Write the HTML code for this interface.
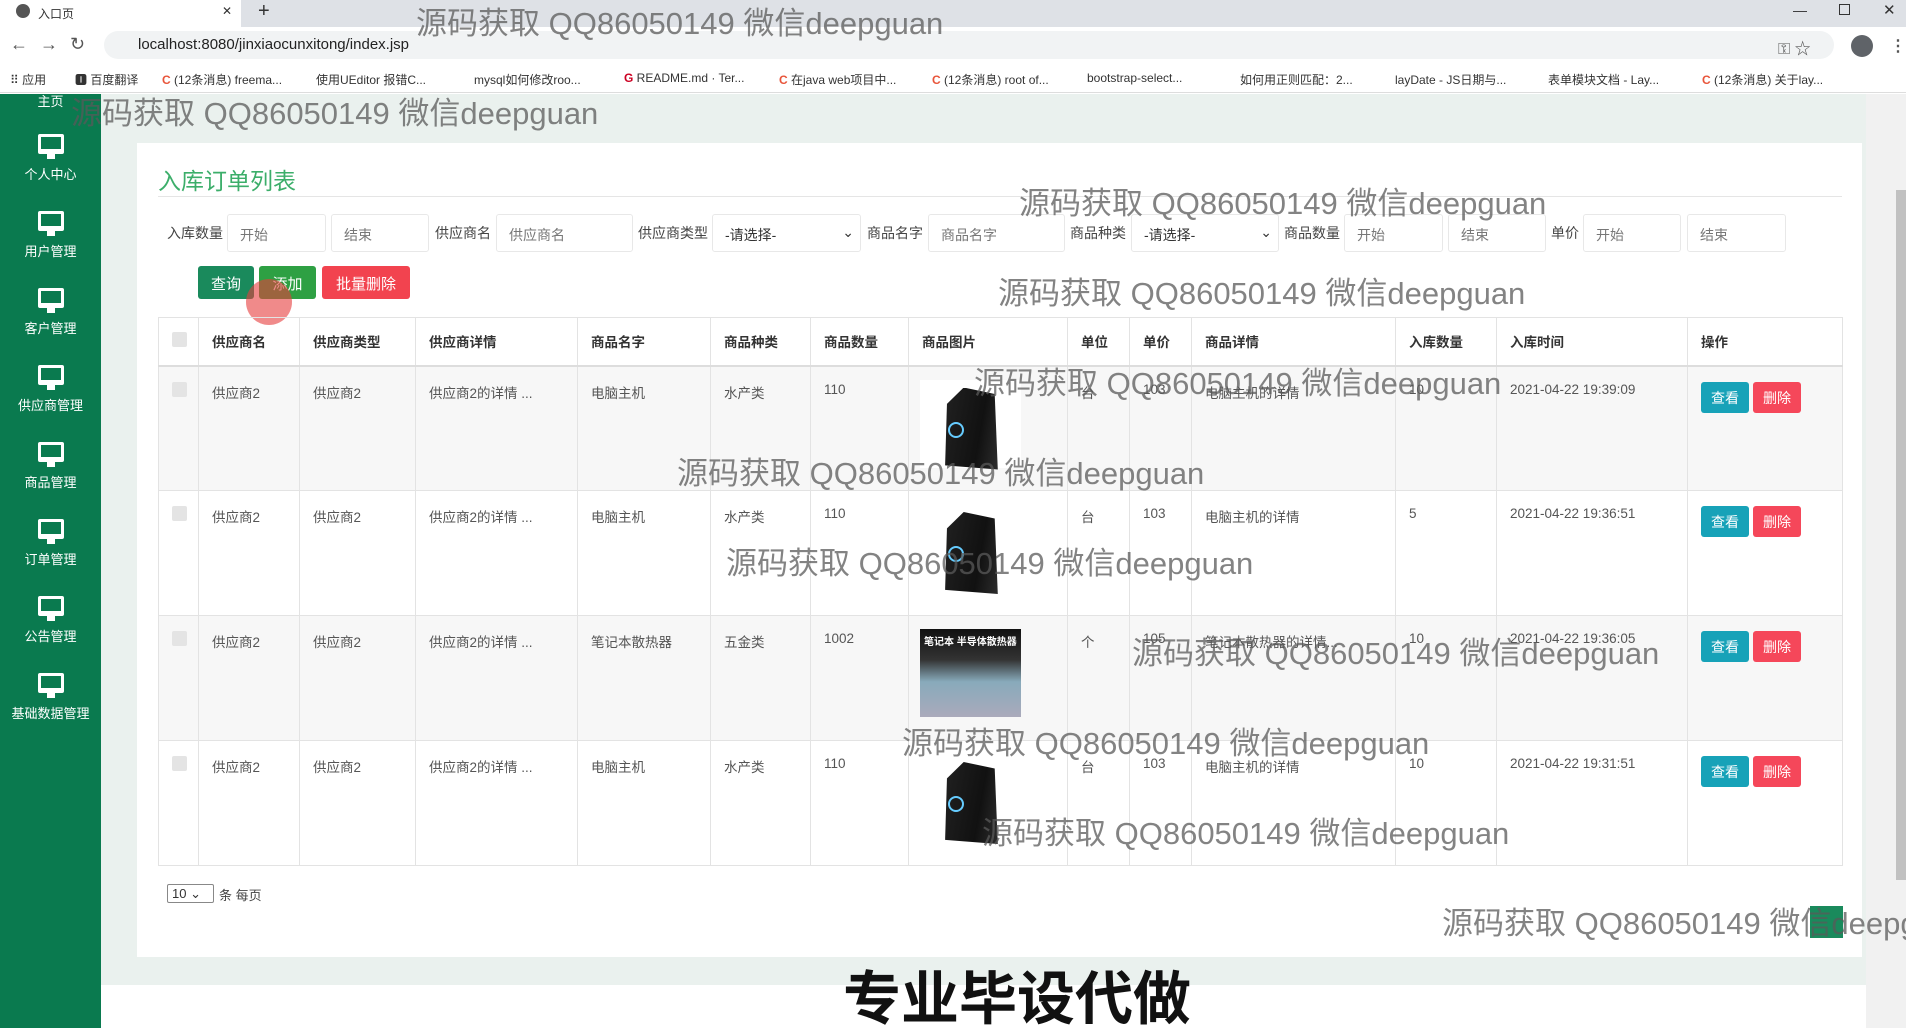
<!DOCTYPE html>
<html><head><meta charset="utf-8"><style>
*{box-sizing:border-box;margin:0;padding:0}
body{width:1906px;height:1028px;overflow:hidden;position:relative;font-family:"Liberation Sans","Noto Sans CJK SC",sans-serif;background:#fff;color:#333}
.abs{position:absolute}
.tabbar{left:0;top:0;width:1906px;height:27px;background:#dee1e6}
.tab{left:0;top:0;width:241px;height:27px;background:#fff;font-size:12px;padding:5px 0 0 38px;color:#333}
.addr{left:0;top:27px;width:1906px;height:36px;background:#fff}
.field{left:104px;top:31px;width:1730px;height:28px;background:#f1f3f4;border-radius:14px;font-size:15px;padding:5px 0 0 34px;color:#222}
.bm{left:0;top:63px;width:1906px;height:30px;background:#fff;border-bottom:1px solid #ddd;font-size:12px;color:#333;white-space:nowrap}
.bm span{position:absolute;top:8px}
.side{left:0;top:94px;width:101px;height:934px;background:#0a7a4f;color:#fff;font-size:13px}
.item{position:absolute;left:0;width:101px;text-align:center}
.mon{display:block;margin:0 auto;width:26px;height:20px;border:3px solid #fff;border-bottom-width:5px;border-radius:2px;position:relative}
.mon:after{content:"";position:absolute;left:6px;top:17px;width:8px;height:5px;background:#fff}
.main{left:101px;top:94px;width:1765px;height:891px;background:#eaf1ee}
.card{left:137px;top:143px;width:1725px;height:814px;background:#fff}
.title{left:158px;top:162px;font-size:23px;color:#3cae6a}
.hr{left:158px;top:196px;width:1684px;height:1px;background:#e5e5e5}
.lbl{position:absolute;top:223px;font-size:14px;color:#444}
.inp{position:absolute;top:214px;height:38px;border:1px solid #e8e8e8;border-radius:3px;font-size:14px;color:#777;padding:10px 0 0 12px}
.btn{position:absolute;top:266px;height:33px;color:#fff;font-size:15px;text-align:center;padding-top:7px;border-radius:3px}
table{position:absolute;left:158px;top:317px;border-collapse:collapse;table-layout:fixed;font-size:13.5px;color:#555}
td,th{border:1px solid #e3e3e3;vertical-align:top;text-align:left;padding:0 0 0 13px;overflow:hidden;white-space:nowrap}
th{height:48px;vertical-align:middle;font-weight:bold;color:#333;border-bottom:2px solid #ddd}
td{height:125px;padding-top:15px}
tr.g td{background:#f7f7f7}
.cb{display:inline-block;width:15px;height:15px;background:#e4e4e4;border-radius:2px}
.pc{display:block;width:101px;height:88px;margin-left:-2px;margin-top:-2px;position:relative;background:#fff}
.tower{position:absolute;left:22px;top:8px;width:62px;height:82px;background:linear-gradient(100deg,#222 0,#111 60%,#333 100%);clip-path:polygon(35% 0,85% 8%,90% 100%,5% 95%,8% 20%)}
.ring{position:absolute;left:28px;top:42px;width:16px;height:16px;border-radius:50%;border:2px solid #6cf}
.ab{display:inline-block;color:#fff;font-size:14px;width:48px;height:31px;text-align:center;padding-top:6px;border-radius:3px}
.wm{position:absolute;font-size:31px;color:rgba(90,90,90,.75);white-space:nowrap}
</style></head><body>
<div class="abs tabbar"></div>
<div class="abs tab">入口页<span style="position:absolute;left:222px;top:4px">✕</span></div>
<div class="abs" style="left:16px;top:4px;width:14px;height:14px;border-radius:50%;background:#555"></div>
<div class="abs" style="left:258px;top:0;font-size:20px;color:#333">+</div>
<div class="abs" style="left:1793px;top:2px;font-size:14px;color:#333">—</div>
<div class="abs" style="left:1839px;top:4px;width:11px;height:11px;border:1px solid #333"></div>
<div class="abs" style="left:1883px;top:1px;font-size:15px;color:#333">✕</div>
<div class="abs addr"></div>
<div class="abs" style="left:10px;top:34px;font-size:18px;color:#555;letter-spacing:12px">←→↻</div>
<div class="abs field">localhost:8080/jinxiaocunxitong/index.jsp</div>
<div class="abs" style="left:1778px;top:35px;font-size:16px;color:#555">⚿ ☆</div>
<div class="abs" style="left:1851px;top:35px;width:22px;height:22px;border-radius:50%;background:#5f6368"></div>
<div class="abs" style="left:1890px;top:36px;font-size:16px;color:#555;font-weight:bold">⋮</div>
<div class="abs bm">
<span style="left:10px">⠿ 应用</span><span style="left:75px">🅸 百度翻译</span><span style="left:162px"><b style="color:#e8553a">C</b> (12条消息) freema...</span><span style="left:316px">使用UEditor 报错C...</span><span style="left:474px">mysql如何修改roo...</span><span style="left:624px"><b style="color:#c02">G</b> README.md · Ter...</span><span style="left:779px"><b style="color:#e8553a">C</b> 在java web项目中...</span><span style="left:932px"><b style="color:#e8553a">C</b> (12条消息) root of...</span><span style="left:1087px">bootstrap-select...</span><span style="left:1240px">如何用正则匹配：2...</span><span style="left:1395px">layDate - JS日期与...</span><span style="left:1548px">表单模块文档 - Lay...</span><span style="left:1702px"><b style="color:#e8553a">C</b> (12条消息) 关于lay...</span>
</div>
<div class="abs side">
<div class="item" style="top:-3px">主页</div>
<div class="item" style="top:40px"><i class="mon"></i><div style="margin-top:10px">个人中心</div></div>
<div class="item" style="top:117px"><i class="mon"></i><div style="margin-top:10px">用户管理</div></div>
<div class="item" style="top:194px"><i class="mon"></i><div style="margin-top:10px">客户管理</div></div>
<div class="item" style="top:271px"><i class="mon"></i><div style="margin-top:10px">供应商管理</div></div>
<div class="item" style="top:348px"><i class="mon"></i><div style="margin-top:10px">商品管理</div></div>
<div class="item" style="top:425px"><i class="mon"></i><div style="margin-top:10px">订单管理</div></div>
<div class="item" style="top:502px"><i class="mon"></i><div style="margin-top:10px">公告管理</div></div>
<div class="item" style="top:579px"><i class="mon"></i><div style="margin-top:10px">基础数据管理</div></div>
</div>
<div class="abs main"></div>
<div class="abs" style="left:1866px;top:94px;width:40px;height:934px;background:#f1f1f1"></div>
<div class="abs" style="left:1896px;top:190px;width:10px;height:690px;background:#c1c1c1"></div>
<div class="abs card"></div>
<div class="abs title">入库订单列表</div>
<div class="abs hr"></div>
<span class="lbl" style="left:167px">入库数量</span><div class="inp" style="left:227px;width:99px">开始</div><div class="inp" style="left:331px;width:98px">结束</div>
<span class="lbl" style="left:435px">供应商名</span><div class="inp" style="left:496px;width:137px">供应商名</div>
<span class="lbl" style="left:638px">供应商类型</span><div class="inp" style="left:712px;width:149px;color:#333">-请选择-<span style="position:absolute;right:6px;top:9px">⌄</span></div>
<span class="lbl" style="left:867px">商品名字</span><div class="inp" style="left:928px;width:137px">商品名字</div>
<span class="lbl" style="left:1070px">商品种类</span><div class="inp" style="left:1131px;width:148px;color:#333">-请选择-<span style="position:absolute;right:6px;top:9px">⌄</span></div>
<span class="lbl" style="left:1284px">商品数量</span><div class="inp" style="left:1344px;width:99px">开始</div><div class="inp" style="left:1448px;width:98px">结束</div>
<span class="lbl" style="left:1551px">单价</span><div class="inp" style="left:1583px;width:98px">开始</div><div class="inp" style="left:1687px;width:99px">结束</div>
<div class="btn" style="left:198px;width:56px;background:#1a8a5c">查询</div>
<div class="btn" style="left:259px;width:57px;background:#2ea043">添加</div>
<div class="btn" style="left:322px;width:88px;background:#f2434f">批量删除</div>
<div class="abs" style="left:246px;top:279px;width:46px;height:46px;border-radius:50%;background:rgba(230,60,60,.6)"></div>
<table>
<colgroup><col style="width:40px"><col style="width:101px"><col style="width:116px"><col style="width:162px"><col style="width:133px"><col style="width:100px"><col style="width:98px"><col style="width:159px"><col style="width:62px"><col style="width:62px"><col style="width:204px"><col style="width:101px"><col style="width:191px"><col style="width:155px"></colgroup>
<tr><th><i class="cb"></i></th><th>供应商名</th><th>供应商类型</th><th>供应商详情</th><th>商品名字</th><th>商品种类</th><th>商品数量</th><th>商品图片</th><th>单位</th><th>单价</th><th>商品详情</th><th>入库数量</th><th>入库时间</th><th>操作</th></tr>
<tr class="g"><td><i class="cb"></i></td><td>供应商2</td><td>供应商2</td><td>供应商2的详情 ...</td><td>电脑主机</td><td>水产类</td><td>110</td><td><div class="pc"><div class="tower"></div><div class="ring"></div></div></td><td>台</td><td>103</td><td>电脑主机的详情</td><td>10</td><td>2021-04-22 19:39:09</td><td><span class="ab" style="background:#17a2b8">查看</span><span class="ab" style="background:#f5475a;margin-left:4px">删除</span></td></tr>
<tr><td><i class="cb"></i></td><td>供应商2</td><td>供应商2</td><td>供应商2的详情 ...</td><td>电脑主机</td><td>水产类</td><td>110</td><td><div class="pc"><div class="tower"></div><div class="ring"></div></div></td><td>台</td><td>103</td><td>电脑主机的详情</td><td>5</td><td>2021-04-22 19:36:51</td><td><span class="ab" style="background:#17a2b8">查看</span><span class="ab" style="background:#f5475a;margin-left:4px">删除</span></td></tr>
<tr class="g"><td><i class="cb"></i></td><td>供应商2</td><td>供应商2</td><td>供应商2的详情 ...</td><td>笔记本散热器</td><td>五金类</td><td>1002</td><td><div class="pc" style="background:linear-gradient(#111 0,#333 35%,#8ab 60%,#aab 100%)"><div style="color:#fff;font-size:10px;padding:4px;font-weight:bold">笔记本 半导体散热器</div></div></td><td>个</td><td>105</td><td>笔记本散热器的详情...</td><td>10</td><td>2021-04-22 19:36:05</td><td><span class="ab" style="background:#17a2b8">查看</span><span class="ab" style="background:#f5475a;margin-left:4px">删除</span></td></tr>
<tr><td><i class="cb"></i></td><td>供应商2</td><td>供应商2</td><td>供应商2的详情 ...</td><td>电脑主机</td><td>水产类</td><td>110</td><td><div class="pc"><div class="tower"></div><div class="ring"></div></div></td><td>台</td><td>103</td><td>电脑主机的详情</td><td>10</td><td>2021-04-22 19:31:51</td><td><span class="ab" style="background:#17a2b8">查看</span><span class="ab" style="background:#f5475a;margin-left:4px">删除</span></td></tr>
</table>
<div class="abs" style="left:167px;top:884px;width:47px;height:19px;border:1px solid #888;border-radius:2px;font-size:13px;padding:1px 0 0 4px">10 ⌄</div>
<div class="abs" style="left:219px;top:885px;font-size:13px;color:#444">条 每页</div>
<div class="abs" style="left:1810px;top:906px;width:33px;height:32px;background:#1a8a5c"></div>
<div class="abs" style="left:843px;top:952px;font-size:58px;font-weight:bold;color:#111">专业毕设代做</div>
<div class="wm" style="left:416px;top:-2px">源码获取 QQ86050149 微信deepguan</div>
<div class="wm" style="left:71px;top:88px">源码获取 QQ86050149 微信deepguan</div>
<div class="wm" style="left:1019px;top:178px">源码获取 QQ86050149 微信deepguan</div>
<div class="wm" style="left:998px;top:268px">源码获取 QQ86050149 微信deepguan</div>
<div class="wm" style="left:974px;top:358px">源码获取 QQ86050149 微信deepguan</div>
<div class="wm" style="left:677px;top:448px">源码获取 QQ86050149 微信deepguan</div>
<div class="wm" style="left:726px;top:538px">源码获取 QQ86050149 微信deepguan</div>
<div class="wm" style="left:1132px;top:628px">源码获取 QQ86050149 微信deepguan</div>
<div class="wm" style="left:902px;top:718px">源码获取 QQ86050149 微信deepguan</div>
<div class="wm" style="left:982px;top:808px">源码获取 QQ86050149 微信deepguan</div>
<div class="wm" style="left:1442px;top:898px">源码获取 QQ86050149 微信deepguan</div>
</body></html>
